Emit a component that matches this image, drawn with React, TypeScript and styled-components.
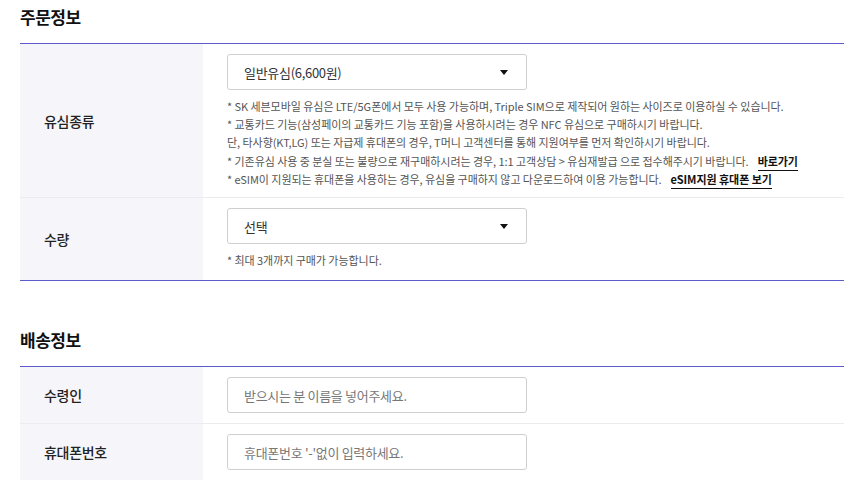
import styled, { createGlobalStyle } from 'styled-components'

const GlobalStyle = createGlobalStyle`
  html, body {
    margin: 0;
    padding: 0;
    background: #fff;
  }
  body {
    font-family: 'Noto Sans CJK KR', 'Noto Sans', sans-serif;
    color: #222;
  }
`

const Page = styled.main`
  padding: 0 0 0 20px;
  width: 824px;
`

const Section = styled.section<{ $gap?: number }>`
  margin-top: ${(p) => p.$gap ?? 0}px;
`

const Title = styled.h2`
  margin: 0;
  height: 43px;
  padding-top: 3px;
  box-sizing: border-box;
  font-size: 17px;
  font-weight: 700;
  letter-spacing: -0.5px;
  line-height: 28px;
  color: #111;
`

const Table = styled.div`
  border-top: 1px solid #5b5bcc;
`

const Row = styled.div<{ $last?: boolean }>`
  display: grid;
  grid-template-columns: 183px 1fr;
  border-bottom: 1px solid ${(p) => (p.$last ? '#5b5bcc' : '#ececf0')};
`

const Label = styled.div`
  background: #f6f6fa;
  display: flex;
  align-items: center;
  padding-left: 24px;
  font-size: 14px;
  font-weight: 500;
  color: #222;
  letter-spacing: -0.3px;
`

const Cell = styled.div<{ $pad?: string }>`
  padding: ${(p) => p.$pad ?? '10px 0 10px 24px'};
`

const Field = styled.div`
  width: 300px;
  height: 36px;
  box-sizing: border-box;
  border: 1px solid #cfcfcf;
  border-radius: 3px;
  display: flex;
  align-items: center;
  justify-content: space-between;
  padding: 0 16px;
  font-size: 13px;
  letter-spacing: -0.3px;
`

const FieldText = styled.span<{ $placeholder?: boolean }>`
  color: ${(p) => (p.$placeholder ? '#777' : '#333')};
`

const Caret = styled.span`
  width: 0;
  height: 0;
  border-left: 4px solid transparent;
  border-right: 4px solid transparent;
  border-top: 5px solid #111;
  margin-right: 2px;
`

const Notes = styled.div`
  margin-top: 7px;
  font-size: 11px;
  line-height: 18.2px;
  color: #555;
  letter-spacing: -0.05px;
  white-space: nowrap;
`

const Link = styled.a`
  margin-left: 9px;
  color: #111;
  font-weight: 700;
  text-decoration: none;
  border-bottom: 1px solid #111;
  padding-bottom: 1px;
`

function Select({ value }: { value: string }) {
  return (
    <Field>
      <FieldText>{value}</FieldText>
      <Caret />
    </Field>
  )
}

export default function App() {
  return (
    <Page>
      <GlobalStyle />
      <Section>
        <Title>주문정보</Title>
        <Table>
          <Row>
            <Label>유심종류</Label>
            <Cell $pad="10px 0 9px 24px">
              <Select value="일반유심(6,600원)" />
              <Notes>
                <div>* SK 세븐모바일 유심은 LTE/5G폰에서 모두 사용 가능하며, Triple SIM으로 제작되어 원하는 사이즈로 이용하실 수 있습니다.</div>
                <div>* 교통카드 기능(삼성페이의 교통카드 기능 포함)을 사용하시려는 경우 NFC 유심으로 구매하시기 바랍니다.</div>
                <div>단, 타사향(KT,LG) 또는 자급제 휴대폰의 경우, T머니 고객센터를 통해 지원여부를 먼저 확인하시기 바랍니다.</div>
                <div>
                  * 기존유심 사용 중 분실 또는 불량으로 재구매하시려는 경우, 1:1 고객상담 &gt; 유심재발급 으로 접수해주시기 바랍니다.
                  <Link href="#">바로가기</Link>
                </div>
                <div>
                  * eSIM이 지원되는 휴대폰을 사용하는 경우, 유심을 구매하지 않고 다운로드하여 이용 가능합니다.
                  <Link href="#">eSIM지원 휴대폰 보기</Link>
                </div>
              </Notes>
            </Cell>
          </Row>
          <Row $last>
            <Label>수량</Label>
            <Cell $pad="10px 0 11px 24px">
              <Select value="선택" />
              <Notes>
                <div>* 최대 3개까지 구매가 가능합니다.</div>
              </Notes>
            </Cell>
          </Row>
        </Table>
      </Section>

      <Section $gap={42}>
        <Title>배송정보</Title>
        <Table>
          <Row>
            <Label>수령인</Label>
            <Cell>
              <Field>
                <FieldText $placeholder>받으시는 분 이름을 넣어주세요.</FieldText>
              </Field>
            </Cell>
          </Row>
          <Row>
            <Label>휴대폰번호</Label>
            <Cell>
              <Field>
                <FieldText $placeholder>휴대폰번호 '-'없이 입력하세요.</FieldText>
              </Field>
            </Cell>
          </Row>
        </Table>
      </Section>
    </Page>
  )
}
